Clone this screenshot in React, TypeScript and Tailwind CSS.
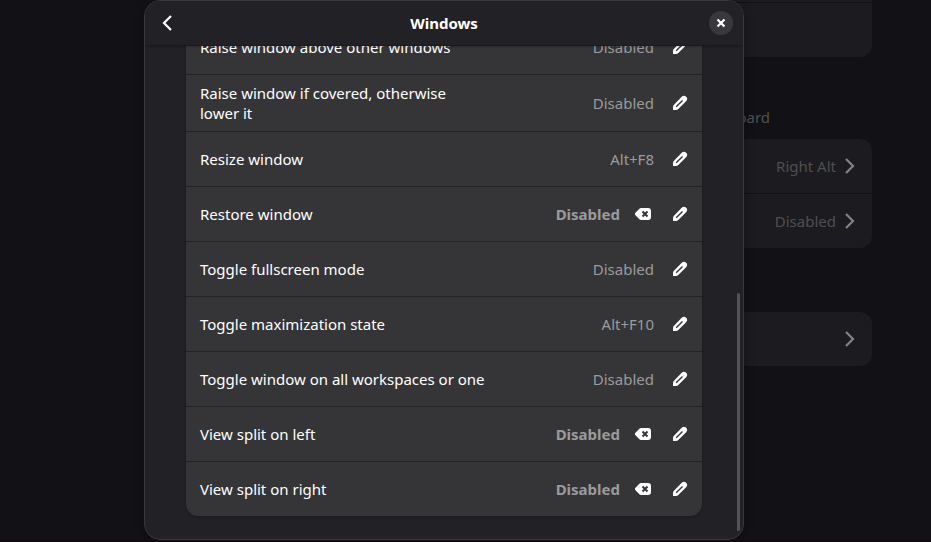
import React from 'react'
import clsx from 'clsx'

interface Shortcut {
    name: string
    keys: string
    modified?: boolean
}

const SHORTCUTS: Shortcut[] = [
    { name: 'Raise window above other windows', keys: 'Disabled' },
    { name: 'Raise window if covered, otherwise lower it', keys: 'Disabled' },
    { name: 'Resize window', keys: 'Alt+F8' },
    { name: 'Restore window', keys: 'Disabled', modified: true },
    { name: 'Toggle fullscreen mode', keys: 'Disabled' },
    { name: 'Toggle maximization state', keys: 'Alt+F10' },
    { name: 'Toggle window on all workspaces or one', keys: 'Disabled' },
    { name: 'View split on left', keys: 'Disabled', modified: true },
    { name: 'View split on right', keys: 'Disabled', modified: true },
]

function Chevron({ className }: { className?: string }) {
    return (
        <svg viewBox="0 0 16 16" className={clsx('size-4', className)} fill="none" stroke="currentColor" strokeWidth="2.2" aria-hidden="true">
            <path d="M4.8 1.8 11 8l-6.2 6.2" strokeLinecap="square" strokeLinejoin="miter" />
        </svg>
    )
}

function PencilIcon() {
    return (
        <svg viewBox="0 0 16 16" className="size-4" aria-hidden="true">
            <path fill="currentColor" d="M9.700 1.800a3.100 3.100 0 0 1 4.400 0 3.100 3.100 0 0 1 0 4.400L6.300 14Q5.300 15 4 15H1v-3q0-1.300 1-2.300Z" />
            <path stroke="#353537" strokeWidth="1.400" d="m4.200 11.800 6.300-6.300" />
        </svg>
    )
}

function ClearIcon() {
    return (
        <svg viewBox="0 0 16 16" className="size-4" aria-hidden="true">
            <path fill="currentColor" d="M6.200 2H13a3 3 0 0 1 3 3v6a3 3 0 0 1-3 3H6.200a3 3 0 0 1-2.100-.9L.5 9.200a1.700 1.700 0 0 1 0-2.400l3.600-3.900A3 3 0 0 1 6.200 2Z" />
            <path stroke="#353537" strokeWidth="2" d="m7.500 5.500 5 5m0-5-5 5" />
        </svg>
    )
}

function CloseIcon() {
    return (
        <svg viewBox="0 0 16 16" className="size-4" aria-hidden="true">
            <path stroke="currentColor" strokeWidth="2.200" strokeLinecap="square" d="m5.300 5.300 5.400 5.400m0-5.400-5.400 5.400" />
        </svg>
    )
}

function ShortcutRow({ name, keys, modified }: Shortcut) {
    return (
        <li className="flex min-h-[55px] items-center border-b border-[#242427] py-2 pr-1.5 pl-3.5 last:min-h-[54px] last:border-b-0">
            <span className="max-w-[288px] text-white">{name}</span>
            <span className={clsx('ml-auto text-[#9b9b9c]', modified && 'font-bold')}>{keys}</span>
            {modified && (
                <button type="button" aria-label={`Reset ${name}`} className="mr-0.5 ml-3.5 flex w-[18px] justify-center text-white">
                    <ClearIcon />
                </button>
            )}
            <button type="button" aria-label={`Edit ${name}`} className="ml-2.5 flex size-8 items-center justify-center text-white">
                <PencilIcon />
            </button>
        </li>
    )
}

function PageRow({ label, value }: { label: string; value?: string }) {
    return (
        <button type="button" aria-label={label} className="flex h-[54px] w-full items-center justify-end gap-1.5 border-[#121115] pr-3.5 not-first:h-[55px] not-first:border-t">
            {value && <span className="text-[#4f4f53]">{value}</span>}
            <Chevron className="text-[#838385]" />
        </button>
    )
}

// Keyboard settings page, dimmed under the dialog
function KeyboardPage() {
    return (
        <main className="absolute inset-0 overflow-hidden pl-[272px]">
            <div className="w-full max-w-[600px]">
                <section className="h-[57px] rounded-b-xl bg-[#1c1b1f] pt-0.5">
                    <div className="border-t border-[#121115]" />
                </section>
                <p className="mt-[50px] pr-[102px] text-right text-[#4f4f53]">keyboard</p>
                <section className="mt-3 rounded-xl bg-[#1c1b1f]">
                    <PageRow label="Alternate Characters Key" value="Right Alt" />
                    <PageRow label="Compose Key" value="Disabled" />
                </section>
                <section className="mt-16 rounded-xl bg-[#1c1b1f]">
                    <PageRow label="View and Customize Shortcuts" />
                </section>
            </div>
        </main>
    )
}

export default function App() {
    return (
        <div className="relative h-screen overflow-hidden border-b-2 border-[#0f0b0f] bg-[#121115] font-['Noto_Sans',sans-serif] text-[15px] leading-5">
            <KeyboardPage />
            <div className="absolute inset-0 flex pl-36">
                <div role="dialog" aria-labelledby="dialog-title" className="flex w-full max-w-[600px] flex-col overflow-hidden rounded-2xl border border-[#38383c] bg-[#222226] shadow-[0_2px_10px_rgba(0,0,0,0.35)]">
                    <header className="z-10 flex h-[45px] shrink-0 items-center justify-between border-b border-[#1a1a1d] bg-[#222226] px-2.5 shadow-[0_1px_2px_rgba(0,0,0,0.2)]">
                        <button type="button" aria-label="Back" className="flex size-6 items-center justify-center text-white">
                            <Chevron className="rotate-180" />
                        </button>
                        <h1 id="dialog-title" className="font-bold text-white">Windows</h1>
                        <button type="button" aria-label="Close" className="flex size-6 items-center justify-center rounded-full bg-[#39393d] text-white">
                            <CloseIcon />
                        </button>
                    </header>
                    <div className="relative flex min-h-0 flex-1 flex-col justify-end px-[41px] pb-[23px]">
                        <ul className="rounded-xl bg-[#353537] shadow-[0_1px_3px_rgba(0,0,0,0.2)]">
                            {SHORTCUTS.map((s) => (
                                <ShortcutRow key={s.name} {...s} />
                            ))}
                        </ul>
                        <div className="absolute right-[3px] bottom-2 h-[238px] w-[3px] rounded-full bg-[#545457]" />
                    </div>
                </div>
            </div>
        </div>
    )
}
